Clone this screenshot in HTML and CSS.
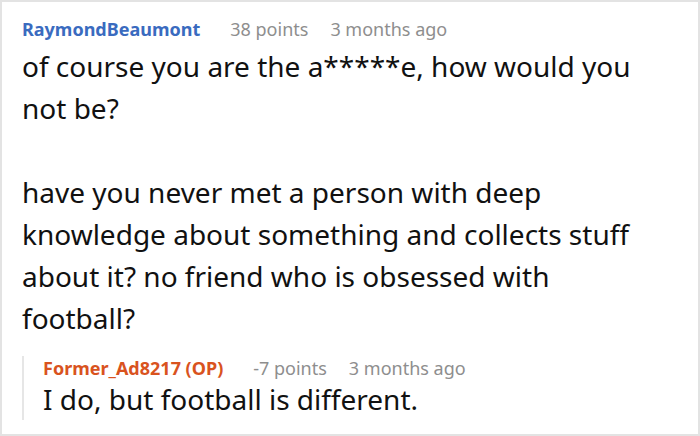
FILE: index.html
```html
<!DOCTYPE html>
<html>
<head>
<meta charset="utf-8">
<link rel="stylesheet" href="styles.css">
</head>
<body>
<div class="card">
  <div class="meta">
    <span class="user">RaymondBeaumont</span>
    <span class="info">38 points</span>
    <span class="info">3 months ago</span>
  </div>
  <div class="text">
    <p>of course you are the a*****e, how would you not be?</p>
    <p class="gap">have you never met a person with deep knowledge about something and collects stuff about it? no friend who is obsessed with football?</p>
  </div>
  <div class="reply">
    <div class="meta">
      <span class="user op">Former_Ad8217 (OP)</span>
      <span class="info">-7 points</span>
      <span class="info">3 months ago</span>
    </div>
    <div class="text">
      <p>I do, but football is different.</p>
    </div>
  </div>
</div>
</body>
</html>
```
FILE: styles.css
```css
html, body {
  margin: 0;
  padding: 0;
  background: #fff;
}
.card {
  width: 700px;
  height: 436px;
  box-sizing: border-box;
  border: 2px solid #e3e3e3;
  padding: 15px 20px 0 20px;
  font-family: "Noto Sans", sans-serif;
  color: #111;
}
.meta {
  display: flex;
  gap: 22px;
  font-size: 18px;
  line-height: 24px;
}
.user {
  font-weight: 700;
  color: #3a6bbf;
  margin-right: 8px;
}
.user.op {
  color: #d9531e;
}
.info {
  color: #8e8e8e;
}
.text {
  font-size: 28px;
  line-height: 42px;
  margin-top: 4px;
}
.text p {
  margin: 0;
  width: 630px;
}
.text p.gap {
  margin-top: 42px;
}
.reply {
  margin-top: 29px;
  border-left: 2px solid #e6e6e6;
  padding-left: 19px;
}
.reply .meta {
  margin-top: -12px;
}
.reply .text {
  margin-top: -2px;
  margin-bottom: -2px;
}
```
